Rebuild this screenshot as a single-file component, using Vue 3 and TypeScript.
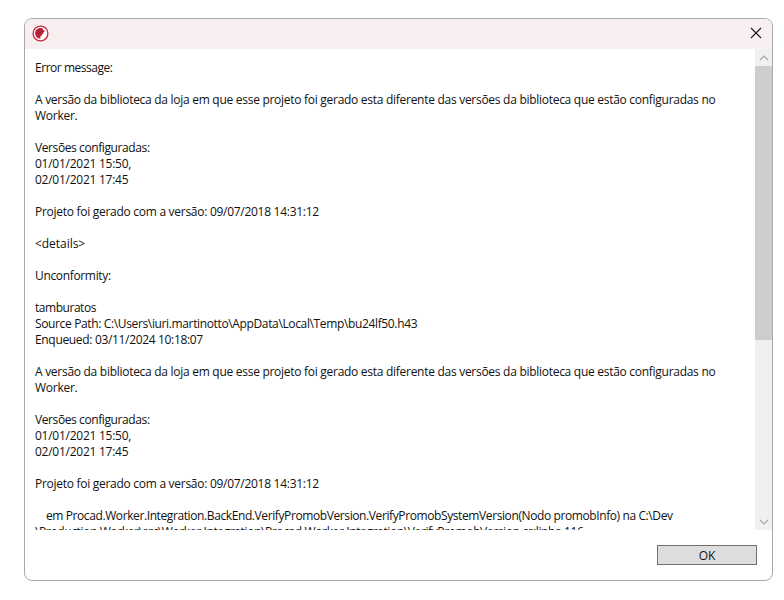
<script setup lang="ts">
interface Line {
  text: string
  spacing?: number
}
const intro = 'A versão da biblioteca da loja em que esse projeto foi gerado esta diferente das versões da biblioteca que estão configuradas no'
const generated = 'Projeto foi gerado com a versão: 09/07/2018 14:31:12'
const lines: Line[] = [
  { text: 'Error message:', spacing: -0.47 },
  { text: '' },
  { text: intro, spacing: -0.28 },
  { text: 'Worker.' },
  { text: '' },
  { text: 'Versões configuradas:', spacing: -0.4 },
  { text: '01/01/2021 15:50,' },
  { text: '02/01/2021 17:45' },
  { text: '' },
  { text: generated, spacing: -0.28 },
  { text: '' },
  { text: '<details>', spacing: -0.04 },
  { text: '' },
  { text: 'Unconformity:', spacing: -0.34 },
  { text: '' },
  { text: 'tamburatos', spacing: -0.46 },
  { text: 'Source Path: C:\\Users\\iuri.martinotto\\AppData\\Local\\Temp\\bu24lf50.h43', spacing: -0.36 },
  { text: 'Enqueued: 03/11/2024 10:18:07', spacing: -0.33 },
  { text: '' },
  { text: intro, spacing: -0.28 },
  { text: 'Worker.' },
  { text: '' },
  { text: 'Versões configuradas:', spacing: -0.4 },
  { text: '01/01/2021 15:50,' },
  { text: '02/01/2021 17:45' },
  { text: '' },
  { text: generated, spacing: -0.28 },
  { text: '' },
  { text: '    em Procad.Worker.Integration.BackEnd.VerifyPromobVersion.VerifyPromobSystemVersion(Nodo promobInfo) na C:\\Dev', spacing: -0.396 },
  { text: '\\Production.Worker\\src\\Worker.Integration\\Procad.Worker.Integration\\VerifyPromobVersion.cs:linha 116', spacing: -0.38 },
]
const spacingOf = (line: Line) => `${line.spacing ?? -0.26}px`
</script>

<template>
  <div class="page">
    <div class="dialog">
      <header class="titlebar">
        <svg class="logo" width="17" height="17" viewBox="0 0 17 17">
          <circle cx="8.5" cy="8.5" r="7.4" fill="#fff" stroke="#c8283f" stroke-width="1.3" />
          <path d="M3.2 8.500C3 5.300 5.500 3 8.600 3c1.200 0 2 .3 2.700.9l-.8 1.200 1.700.2.500 1.400-1.500.5.400 1.500-1.600.3-.2 1.700-1.300.4-.1 2.500C5.400 13.700 3.400 11.500 3.200 8.500z" fill="#b81f38" />
        </svg>
        <button class="close" type="button" aria-label="Fechar">
          <svg width="12" height="12" viewBox="0 0 12 12">
            <path d="M1 1l10 10M11 1L1 11" stroke="#1a1a1a" stroke-width="1.1" fill="none" />
          </svg>
        </button>
      </header>
      <div class="body">
        <div class="content">
          <div v-for="(line, i) in lines" :key="i" class="line" :style="{ letterSpacing: spacingOf(line) }">{{ line.text }}</div>
        </div>
        <div class="scrollbar">
          <div class="arrow">
            <svg width="10" height="6" viewBox="0 0 10 6"><path d="M1 5l4-4 4 4" stroke="#a6a6a6" stroke-width="1.2" fill="none" /></svg>
          </div>
          <div class="track"><div class="thumb"></div></div>
          <div class="arrow">
            <svg width="10" height="6" viewBox="0 0 10 6"><path d="M1 1l4 4 4-4" stroke="#a6a6a6" stroke-width="1.2" fill="none" /></svg>
          </div>
        </div>
      </div>
      <footer class="footer">
        <button class="ok" type="button">OK</button>
      </footer>
    </div>
  </div>
</template>

<style>
html, body { margin: 0; background: #fff; }
</style>

<style scoped>
.page {
  width: 784px;
  height: 600px;
  padding: 18px 11px 19px 24px;
  box-sizing: border-box;
  background: #fff;
  font-family: "Open Sans", "Noto Sans", sans-serif;
  font-size: 12px;
  color: #111;
}
.dialog {
  height: 100%;
  box-sizing: border-box;
  border: 1px solid #a9a9a9;
  border-radius: 8px;
  overflow: hidden;
  display: flex;
  flex-direction: column;
  background: #fff;
}
.titlebar {
  height: 30px;
  flex: none;
  box-sizing: border-box;
  background: #f8eff0;
  display: flex;
  align-items: center;
  justify-content: space-between;
  padding: 0 10px 2px 7px;
}
.logo { display: block; }
.close {
  border: 0;
  background: none;
  padding: 0;
  width: 12px;
  height: 12px;
  display: block;
}
.close svg { display: block; }
.body {
  height: 481px;
  flex: none;
  display: flex;
}
.content {
  flex: 1;
  min-width: 0;
  height: 481px;
  overflow: hidden;
  padding: 11px 0 0 10px;
  box-sizing: border-box;
}
.line {
  height: 16px;
  line-height: 16px;
  white-space: pre;
}
.scrollbar {
  width: 17px;
  flex: none;
  background: #f0f0f0;
  display: flex;
  flex-direction: column;
}
.arrow {
  height: 17px;
  flex: none;
  display: flex;
  align-items: center;
  justify-content: center;
}
.track { flex: 1; }
.thumb { height: 274px; background: #cdcdcd; }
.footer {
  flex: 1;
  display: flex;
  justify-content: flex-end;
  align-items: flex-start;
  padding: 15px 15px 0 0;
}
.ok {
  width: 100px;
  height: 20px;
  box-sizing: border-box;
  border: 1px solid #707070;
  background: #dddddd;
  font: inherit;
  color: #111;
  padding: 0;
}
</style>
